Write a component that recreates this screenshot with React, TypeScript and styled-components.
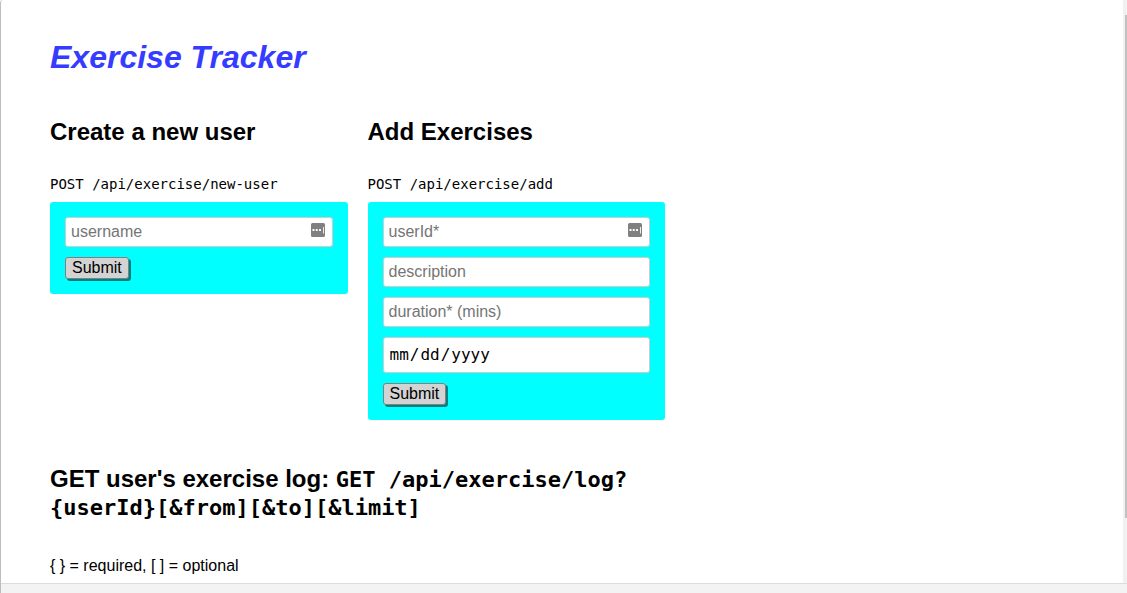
import React from "react";
import styled, { createGlobalStyle } from "styled-components";

const sans = `"Liberation Sans", Arial, sans-serif`;
const mono = `"DejaVu Sans Mono", monospace`;

const GlobalStyle = createGlobalStyle`
  *, *::before, *::after { box-sizing: border-box; }
  body {
    margin: 0;
    background: #fff;
    color: #000;
    font: 16px/20px ${sans};
  }
`;

const Frame = styled.div`
  display: flex;
  flex-direction: column;
  height: 100vh;
  overflow: hidden;
  border-left: 1px solid #bdbdbd;
  border-top-left-radius: 3px;
`;

const Viewport = styled.div`
  display: flex;
  flex: 1;
  min-height: 0;
`;

const Main = styled.main`
  flex: 1;
  min-width: 0;
  overflow: hidden;
  padding: 37px 49px 0;
`;

const ScrollTrack = styled.div`
  flex: none;
  width: 4px;
  padding: 15px 0 0 2px;
  background: #f1f1f1;
`;

const ScrollThumb = styled.div`
  height: calc(100% - 65px);
  background: #c1c1c1;
`;

const StatusBar = styled.footer`
  flex: none;
  height: 10px;
  border-top: 1px solid #dcdcdc;
  background: #f3f3f3;
`;

const Content = styled.div`
  max-width: 615px;
`;

const Title = styled.h1`
  margin: 0 0 41px;
  color: #363cff;
  font-size: 32px;
  font-style: italic;
  line-height: 40px;
`;

const Heading = styled.h2`
  margin: 0;
  font-size: 24px;
  line-height: 28px;
`;

const Columns = styled.div`
  display: grid;
  grid-template-columns: 1fr 1fr;
  align-items: start;
  gap: 20px;
`;

const Endpoint = styled.p`
  margin: 28px 0 8px;
`;

const Code = styled.code<{ $large?: boolean }>`
  font-family: ${mono};
  font-size: ${(p) => (p.$large ? 22 : 14)}px;
  line-height: 1;
`;

const Form = styled.form`
  display: flex;
  flex-direction: column;
  align-items: flex-start;
  gap: 10px;
  padding: 15px;
  border-radius: 3px;
  background: #00ffff;
`;

const Field = styled.div`
  position: relative;
  display: flex;
  width: 100%;
`;

const Input = styled.input`
  width: 100%;
  height: 30px;
  padding: 5px;
  border: 1px solid #ccc;
  border-radius: 3px;
  background: #fff;
  color: #000;
  font: 16px/18px ${sans};

  &::placeholder {
    color: #757575;
    opacity: 1;
  }

  &[type="date"] {
    height: 36px;
    font-family: ${mono};
  }

  &::-webkit-calendar-picker-indicator {
    display: none;
  }
`;

const AutofillIcon = styled.svg`
  position: absolute;
  top: 6px;
  right: 8px;
  width: 14px;
  height: 14px;
`;

const SubmitButton = styled.button`
  height: 22px;
  padding: 0 6px;
  border: 1px solid #808080;
  border-radius: 3px;
  background: #d3d3d3;
  box-shadow: 2px 2px 0 #008080;
  color: #000;
  font: 16px/18px ${sans};
`;

const LogSection = styled.section`
  margin-top: 45px;
`;

const Legend = styled.p`
  margin: 35px 0 0;
`;

interface TextFieldProps {
  name: string;
  label: string;
  type?: string;
  autofill?: boolean;
}

function TextField({ name, label, type = "text", autofill }: TextFieldProps) {
  return (
    <Field>
      <Input
        type={type}
        name={name}
        aria-label={label}
        placeholder={type === "date" ? undefined : label}
      />
      {autofill && (
        <AutofillIcon viewBox="0 0 14 14" aria-hidden="true">
          <rect width="14" height="14" rx="1.5" fill="#808080" />
          <g fill="#fff">
            <rect x="1.5" y="6" width="2" height="2" rx=".5" />
            <rect x="4.75" y="6" width="2" height="2" rx=".5" />
            <rect x="8" y="6" width="2" height="2" rx=".5" />
            <rect x="12" y="4" width="1" height="6.5" opacity=".85" />
          </g>
        </AutofillIcon>
      )}
    </Field>
  );
}

export default function App() {
  return (
    <>
      <GlobalStyle />
      <Frame>
        <Viewport>
          <Main>
            <Content>
              <Title>Exercise Tracker</Title>
              <Columns>
                <section>
                  <Heading>Create a new user</Heading>
                  <Endpoint>
                    <Code>POST /api/exercise/new-user</Code>
                  </Endpoint>
                  <Form>
                    <TextField name="username" label="username" autofill />
                    <SubmitButton type="submit">Submit</SubmitButton>
                  </Form>
                </section>
                <section>
                  <Heading>Add Exercises</Heading>
                  <Endpoint>
                    <Code>POST /api/exercise/add</Code>
                  </Endpoint>
                  <Form>
                    <TextField name="userId" label="userId*" autofill />
                    <TextField name="description" label="description" />
                    <TextField name="duration" label="duration* (mins)" />
                    <TextField name="date" label="date" type="date" />
                    <SubmitButton type="submit">Submit</SubmitButton>
                  </Form>
                </section>
              </Columns>
              <LogSection>
                <Heading>
                  GET user's exercise log:{" "}
                  <Code $large>
                    GET /api/exercise/log?{"{userId}[&from][&to][&limit]"}
                  </Code>
                </Heading>
                <Legend>{"{ } = required, [ ] = optional"}</Legend>
              </LogSection>
            </Content>
          </Main>
          <ScrollTrack>
            <ScrollThumb />
          </ScrollTrack>
        </Viewport>
        <StatusBar />
      </Frame>
    </>
  );
}
